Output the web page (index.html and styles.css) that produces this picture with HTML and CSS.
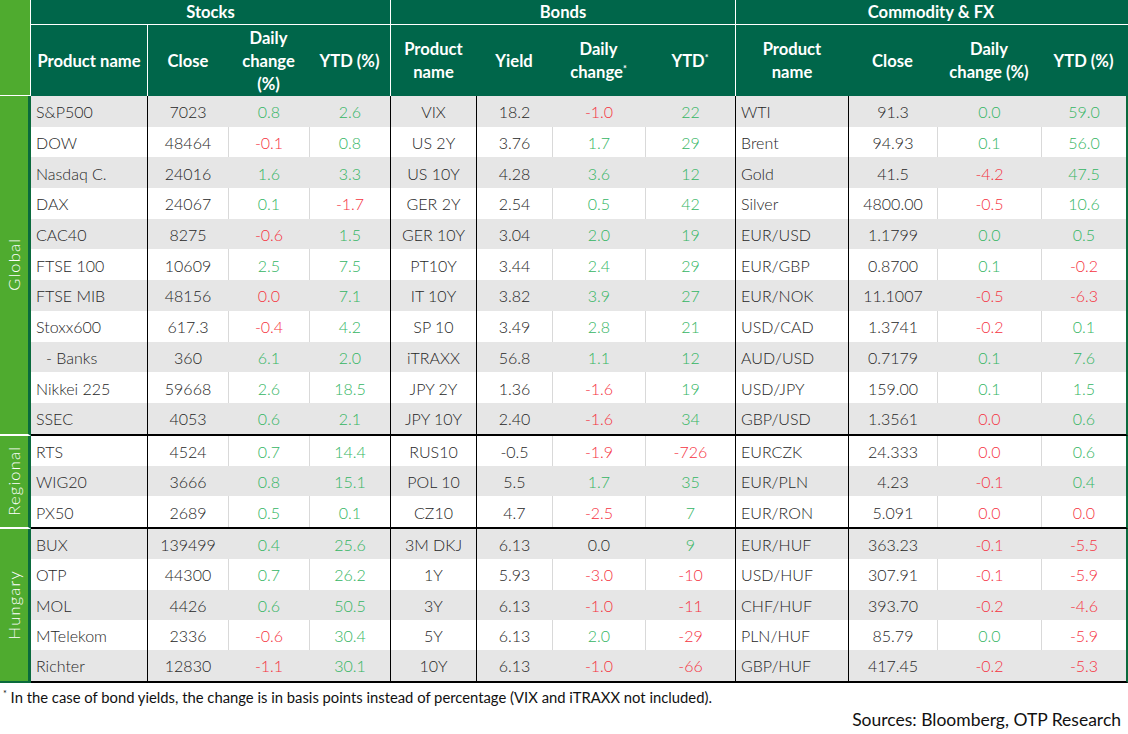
FILE: index.html
```html
<!DOCTYPE html>
<html lang="en">
<head>
<meta charset="utf-8">
<title>Markets</title>
<link rel="stylesheet" href="styles.css">
</head>
<body>
<div class="sheet">
  <div class="head">
    <div class="head-cat"></div>
    <div class="head-main">
      <div class="sections">
        <div class="sec">Stocks</div>
        <div class="sec sec-line">Bonds</div>
        <div class="sec sec-line">Commodity &amp; FX</div>
      </div>
      <div class="colheads">
        <div class="ch"><span>Product name</span></div>
        <div class="ch ch-line"><span>Close</span></div>
        <div class="ch"><span>Daily<br>change<br>(%)</span></div>
        <div class="ch"><span>YTD (%)</span></div>
        <div class="ch ch-line"><span>Product<br>name</span></div>
        <div class="ch"><span>Yield</span></div>
        <div class="ch"><span>Daily<br>change<sup>*</sup></span></div>
        <div class="ch"><span>YTD<sup>*</sup></span></div>
        <div class="ch ch-line"><span>Product<br>name</span></div>
        <div class="ch"><span>Close</span></div>
        <div class="ch"><span>Daily<br>change (%)</span></div>
        <div class="ch"><span>YTD (%)</span></div>
      </div>
    </div>
  </div>

  <div class="group g-global">
    <div class="cat"><span>Global</span></div>
    <div class="rows">
      <div class="row grey"><div class="nm">S&amp;P500</div><div>7023</div><div class="g">0.8</div><div class="g">2.6</div><div>VIX</div><div>18.2</div><div class="r">-1.0</div><div class="g">22</div><div class="nm">WTI</div><div>91.3</div><div class="g">0.0</div><div class="g">59.0</div></div>
      <div class="row"><div class="nm">DOW</div><div>48464</div><div class="r">-0.1</div><div class="g">0.8</div><div>US 2Y</div><div>3.76</div><div class="g">1.7</div><div class="g">29</div><div class="nm">Brent</div><div>94.93</div><div class="g">0.1</div><div class="g">56.0</div></div>
      <div class="row grey"><div class="nm">Nasdaq C.</div><div>24016</div><div class="g">1.6</div><div class="g">3.3</div><div>US 10Y</div><div>4.28</div><div class="g">3.6</div><div class="g">12</div><div class="nm">Gold</div><div>41.5</div><div class="r">-4.2</div><div class="g">47.5</div></div>
      <div class="row"><div class="nm">DAX</div><div>24067</div><div class="g">0.1</div><div class="r">-1.7</div><div>GER 2Y</div><div>2.54</div><div class="g">0.5</div><div class="g">42</div><div class="nm">Silver</div><div>4800.00</div><div class="r">-0.5</div><div class="g">10.6</div></div>
      <div class="row grey"><div class="nm">CAC40</div><div>8275</div><div class="r">-0.6</div><div class="g">1.5</div><div>GER 10Y</div><div>3.04</div><div class="g">2.0</div><div class="g">19</div><div class="nm">EUR/USD</div><div>1.1799</div><div class="g">0.0</div><div class="g">0.5</div></div>
      <div class="row"><div class="nm">FTSE 100</div><div>10609</div><div class="g">2.5</div><div class="g">7.5</div><div>PT10Y</div><div>3.44</div><div class="g">2.4</div><div class="g">29</div><div class="nm">EUR/GBP</div><div>0.8700</div><div class="g">0.1</div><div class="r">-0.2</div></div>
      <div class="row grey"><div class="nm">FTSE MIB</div><div>48156</div><div class="r">0.0</div><div class="g">7.1</div><div>IT 10Y</div><div>3.82</div><div class="g">3.9</div><div class="g">27</div><div class="nm">EUR/NOK</div><div>11.1007</div><div class="r">-0.5</div><div class="r">-6.3</div></div>
      <div class="row"><div class="nm">Stoxx600</div><div>617.3</div><div class="r">-0.4</div><div class="g">4.2</div><div>SP 10</div><div>3.49</div><div class="g">2.8</div><div class="g">21</div><div class="nm">USD/CAD</div><div>1.3741</div><div class="r">-0.2</div><div class="g">0.1</div></div>
      <div class="row grey"><div class="nm indent">- Banks</div><div>360</div><div class="g">6.1</div><div class="g">2.0</div><div>iTRAXX</div><div>56.8</div><div class="g">1.1</div><div class="g">12</div><div class="nm">AUD/USD</div><div>0.7179</div><div class="g">0.1</div><div class="g">7.6</div></div>
      <div class="row"><div class="nm">Nikkei 225</div><div>59668</div><div class="g">2.6</div><div class="g">18.5</div><div>JPY 2Y</div><div>1.36</div><div class="r">-1.6</div><div class="g">19</div><div class="nm">USD/JPY</div><div>159.00</div><div class="g">0.1</div><div class="g">1.5</div></div>
      <div class="row grey"><div class="nm">SSEC</div><div>4053</div><div class="g">0.6</div><div class="g">2.1</div><div>JPY 10Y</div><div>2.40</div><div class="r">-1.6</div><div class="g">34</div><div class="nm">GBP/USD</div><div>1.3561</div><div class="r">0.0</div><div class="g">0.6</div></div>
    </div>
  </div>

  <div class="group g-regional">
    <div class="cat"><span>Regional</span></div>
    <div class="rows">
      <div class="row"><div class="nm">RTS</div><div>4524</div><div class="g">0.7</div><div class="g">14.4</div><div>RUS10</div><div>-0.5</div><div class="r">-1.9</div><div class="r">-726</div><div class="nm">EURCZK</div><div>24.333</div><div class="r">0.0</div><div class="g">0.6</div></div>
      <div class="row grey"><div class="nm">WIG20</div><div>3666</div><div class="g">0.8</div><div class="g">15.1</div><div>POL 10</div><div>5.5</div><div class="g">1.7</div><div class="g">35</div><div class="nm">EUR/PLN</div><div>4.23</div><div class="r">-0.1</div><div class="g">0.4</div></div>
      <div class="row"><div class="nm">PX50</div><div>2689</div><div class="g">0.5</div><div class="g">0.1</div><div>CZ10</div><div>4.7</div><div class="r">-2.5</div><div class="g">7</div><div class="nm">EUR/RON</div><div>5.091</div><div class="r">0.0</div><div class="r">0.0</div></div>
    </div>
  </div>

  <div class="group g-hungary">
    <div class="cat"><span>Hungary</span></div>
    <div class="rows">
      <div class="row grey"><div class="nm">BUX</div><div>139499</div><div class="g">0.4</div><div class="g">25.6</div><div>3M DKJ</div><div>6.13</div><div>0.0</div><div class="g">9</div><div class="nm">EUR/HUF</div><div>363.23</div><div class="r">-0.1</div><div class="r">-5.5</div></div>
      <div class="row"><div class="nm">OTP</div><div>44300</div><div class="g">0.7</div><div class="g">26.2</div><div>1Y</div><div>5.93</div><div class="r">-3.0</div><div class="r">-10</div><div class="nm">USD/HUF</div><div>307.91</div><div class="r">-0.1</div><div class="r">-5.9</div></div>
      <div class="row grey"><div class="nm">MOL</div><div>4426</div><div class="g">0.6</div><div class="g">50.5</div><div>3Y</div><div>6.13</div><div class="r">-1.0</div><div class="r">-11</div><div class="nm">CHF/HUF</div><div>393.70</div><div class="r">-0.2</div><div class="r">-4.6</div></div>
      <div class="row"><div class="nm">MTelekom</div><div>2336</div><div class="r">-0.6</div><div class="g">30.4</div><div>5Y</div><div>6.13</div><div class="g">2.0</div><div class="r">-29</div><div class="nm">PLN/HUF</div><div>85.79</div><div class="g">0.0</div><div class="r">-5.9</div></div>
      <div class="row grey"><div class="nm">Richter</div><div>12830</div><div class="r">-1.1</div><div class="g">30.1</div><div>10Y</div><div>6.13</div><div class="r">-1.0</div><div class="r">-66</div><div class="nm">GBP/HUF</div><div>417.45</div><div class="r">-0.2</div><div class="r">-5.3</div></div>
    </div>
  </div>

  <p class="note"><sup>*</sup> In the case of bond yields, the change is in basis points instead of percentage (VIX and iTRAXX not included).</p>
  <p class="source">Sources: Bloomberg, OTP Research</p>
</div>
</body>
</html>
```

FILE: styles.css
```css
html, body {
  margin: 0;
  padding: 0;
  background: #ffffff;
}

.sheet {
  width: 1128px;
  font-family: "Lato", "Open Sans", "DejaVu Sans", sans-serif;
  color: #262626;
}

/* ---------- header ---------- */
.head {
  display: flex;
  height: 96px;
}

.head-cat {
  width: 30px;
  background: #4fab2f;
  border-right: 1px solid #ffffff;
  border-bottom: 1px solid #ffffff;
  box-sizing: content-box;
}

.head-main {
  flex: 1;
  display: flex;
  flex-direction: column;
  background: #00664a;
  color: #ffffff;
  font-weight: 700;
  font-size: 16.6px;
}

.sections {
  display: grid;
  grid-template-columns: 359px 345px 391px;
  height: 25px;
  border-bottom: 1px solid #ffffff;
  box-sizing: border-box;
}

.sec {
  display: flex;
  align-items: center;
  justify-content: center;
  box-sizing: border-box;
}

.sec-line {
  border-left: 1px solid #ffffff;
}

.colheads {
  flex: 1;
  display: grid;
  grid-template-columns: 116px 81px 81px 81px 86px 76px 93px 90px 113px 89px 104px 85px;
}

.ch {
  display: flex;
  align-items: center;
  justify-content: center;
  text-align: center;
  line-height: 23px;
  box-sizing: border-box;
  padding-top: 1px;
}

.ch-line {
  border-left: 1px solid #ffffff;
}

.ch sup, .note sup {
  font-size: 9px;
  line-height: 0;
  vertical-align: 6px;
}

/* ---------- body groups ---------- */
.group {
  display: flex;
}

.cat {
  width: 31px;
  box-sizing: border-box;
  background: #4fab2f;
  border-right: 3px solid #0a6a3c;
  border-bottom: 2px solid #ffffff;
  display: flex;
  align-items: center;
  justify-content: center;
  color: #ffffff;
  font-weight: 300;
  font-size: 16.5px;
  letter-spacing: 1.2px;
}

.g-hungary .cat {
  border-bottom-color: #0a6a3c;
}

.cat span {
  writing-mode: vertical-rl;
  transform: rotate(180deg);
}

.rows {
  width: 1097px;
  box-sizing: border-box;
  border-bottom: 2px solid #000000;
  border-right: 2px solid #0a6a3c;
}

.row {
  display: grid;
  grid-template-columns: 116px 81px 81px 81px 86px 76px 93px 90px 113px 89px 104px 85px;
  height: 30.4px;
  font-size: 16px;
  font-weight: 300;
  background: #ffffff;
}

.g-global .row {
  height: 30.7px;
}

.row.grey {
  background: #e6e6e6;
}

.row > div {
  display: flex;
  align-items: center;
  justify-content: center;
  box-sizing: border-box;
  white-space: nowrap;
  padding-top: 1px;
}

.row > div.nm {
  justify-content: flex-start;
  padding-left: 5px;
}

.row > div.indent {
  padding-left: 15px;
}

.row > div:nth-child(2),
.row > div:nth-child(5),
.row > div:nth-child(6),
.row > div:nth-child(9),
.row > div:nth-child(10) {
  border-left: 1px solid #000000;
}

.row > div:nth-child(3),
.row > div:nth-child(4),
.row > div:nth-child(7),
.row > div:nth-child(8),
.row > div:nth-child(11),
.row > div:nth-child(12) {
  border-left: 1px solid #d9d9d9;
}

.row.grey > div:nth-child(3),
.row.grey > div:nth-child(4),
.row.grey > div:nth-child(7),
.row.grey > div:nth-child(8),
.row.grey > div:nth-child(11),
.row.grey > div:nth-child(12) {
  border-left-color: transparent;
}

.row > .g {
  color: #34b563;
}

.row > .r {
  color: #f5333f;
}

/* ---------- footer ---------- */
.note {
  margin: 5px 0 0 3px;
  font-size: 14.8px;
  color: #111111;
  line-height: 19px;
}

.source {
  margin: 2px 7px 0 0;
  text-align: right;
  font-size: 17.5px;
  color: #111111;
  line-height: 22px;
}
```
